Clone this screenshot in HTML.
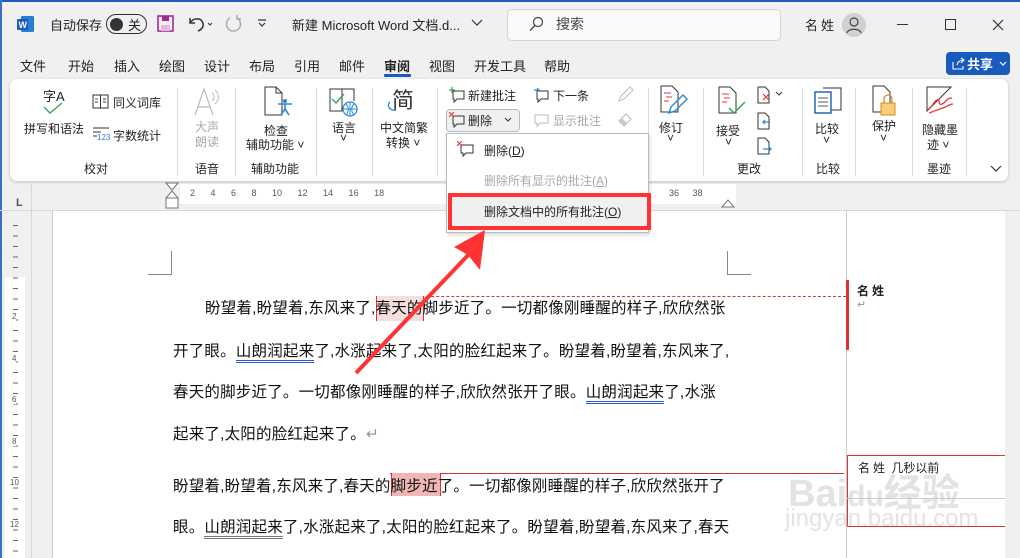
<!DOCTYPE html>
<html style="width:1020px;height:558px;overflow:hidden"><head><meta charset="utf-8">
<style>
*{margin:0;padding:0;box-sizing:border-box}
body{width:1020px;height:558px;overflow:hidden;background:#f0f0f0;font-family:"Liberation Sans","Noto Sans CJK SC",sans-serif;color:#222;position:relative}
.a{position:absolute;white-space:nowrap}
.t12{font-size:12px}.t13{font-size:13px}.t14{font-size:14px}
.g{color:#a8a8a8}
.sep{position:absolute;top:88px;width:1px;height:88px;background:#dcdcdc}
.doc{font-size:15.5px;letter-spacing:0.2px;color:#111}
.ul{border-bottom:3px double #2a5bd7}
.ulg{border-bottom:3px double #777}
.vn{position:absolute;left:12px;font-size:8px;color:#555}
</style></head><body>
<div class="a" style="left:0;top:0;width:1020px;height:2px;background:#1e5bbf"></div>
<div class="a" style="left:0;top:0;width:2px;height:558px;background:#3a6fc9"></div>
<!-- title bar -->
<svg class="a" style="left:17px;top:15px" width="18" height="18"><rect x="4" y="1" width="13" height="16" rx="1.5" fill="#2b7cd3"/><rect x="0" y="4" width="11" height="11" rx="1" fill="#185abd"/><text x="1.5" y="13" font-size="9" font-weight="bold" fill="#fff" font-family="Liberation Sans">W</text></svg>
<div class="a t13" style="left:50px;top:15px">自动保存</div>
<div class="a" style="left:106px;top:14px;width:41px;height:20px;border:1.3px solid #333;border-radius:10px"></div>
<div class="a" style="left:110px;top:18px;width:13px;height:13px;border-radius:50%;background:#333"></div>
<div class="a t13" style="left:128px;top:15px">关</div>
<svg class="a" style="left:157px;top:15px" width="18" height="18"><rect x="1" y="1" width="15" height="15" fill="none" stroke="#a32c94" stroke-width="1.6"/><rect x="5" y="1" width="7" height="5" fill="#a32c94"/><rect x="4" y="10" width="9" height="6" fill="#e7b7e0"/></svg>
<svg class="a" style="left:186px;top:14px" width="30" height="20"><path d="M4 4v5h5M4 9c3-5 11-6 13 0c1 4-2 7-5 8" fill="none" stroke="#333" stroke-width="1.5"/><path d="M22 9l2 2 2-2" fill="none" stroke="#333"/></svg>
<svg class="a" style="left:223px;top:14px" width="20" height="20"><path d="M14 4a7 7 0 1 1-7 0" fill="none" stroke="#aaa" stroke-width="1.5"/><path d="M14 1v4h4" fill="none" stroke="#aaa" stroke-width="1.5"/></svg>
<svg class="a" style="left:256px;top:18px" width="12" height="10"><path d="M2 2h8M3 5l3 3 3-3" fill="none" stroke="#333" stroke-width="1.2"/></svg>
<div class="a t13" style="left:292px;top:15px">新建 Microsoft Word 文档.d...</div>
<svg class="a" style="left:471px;top:19px" width="12" height="8"><path d="M1 1l5 5 5-5" fill="none" stroke="#333" stroke-width="1.2"/></svg>
<div class="a" style="left:507px;top:9px;width:274px;height:32px;background:#fafafa;border:1px solid #d4d4d4;border-radius:5px"></div>
<svg class="a" style="left:528px;top:16px" width="16" height="16"><circle cx="10" cy="6" r="4.5" fill="none" stroke="#444" stroke-width="1.2"/><path d="M7 9.5L2 14.5" stroke="#444" stroke-width="1.3"/></svg>
<div class="a t14" style="left:556px;top:14px;color:#444">搜索</div>
<div class="a t13" style="left:805px;top:15px;letter-spacing:3px">名姓</div>
<div class="a" style="left:842px;top:13px;width:24px;height:24px;border-radius:50%;background:#d0d0d0"></div>
<svg class="a" style="left:842px;top:13px" width="24" height="24"><circle cx="12" cy="9" r="4" fill="none" stroke="#444" stroke-width="1.2"/><path d="M5 20c1-5 13-5 14 0" fill="none" stroke="#444" stroke-width="1.2"/></svg>
<div class="a" style="left:897px;top:24px;width:11px;height:1px;background:#333"></div>
<div class="a" style="left:945px;top:19px;width:11px;height:11px;border:1.2px solid #333"></div>
<svg class="a" style="left:992px;top:19px" width="12" height="12"><path d="M1 1l10 10M11 1L1 11" stroke="#333" stroke-width="1.2"/></svg>
<!-- tabs -->
<div class="a t13" style="left:20px;top:56px">文件</div>
<div class="a t13" style="left:68px;top:56px">开始</div>
<div class="a t13" style="left:114px;top:56px">插入</div>
<div class="a t13" style="left:159px;top:56px">绘图</div>
<div class="a t13" style="left:204px;top:56px">设计</div>
<div class="a t13" style="left:249px;top:56px">布局</div>
<div class="a t13" style="left:294px;top:56px">引用</div>
<div class="a t13" style="left:339px;top:56px">邮件</div>
<div class="a t13" style="left:384px;top:56px;font-weight:bold">审阅</div>
<div class="a" style="left:384px;top:74px;width:27px;height:3px;background:#185abd;border-radius:1px"></div>
<div class="a t13" style="left:429px;top:56px">视图</div>
<div class="a t13" style="left:474px;top:56px">开发工具</div>
<div class="a t13" style="left:544px;top:56px">帮助</div>
<div class="a" style="left:946px;top:52px;width:64px;height:23px;background:#185abd;border-radius:4px"></div>
<svg class="a" style="left:951px;top:56px" width="14" height="15"><path d="M2 6v7h10v-3M6 9c1-4 4-5 7-5M10 2l3 2-3 3" fill="none" stroke="#fff" stroke-width="1.1"/></svg>
<div class="a t13" style="left:967px;top:54px;color:#fff;font-weight:bold">共享</div>
<svg class="a" style="left:999px;top:61px" width="8" height="6"><path d="M1 1l3 3 3-3" fill="none" stroke="#fff" stroke-width="1.2"/></svg>
<!-- ribbon -->
<div class="a" style="left:10px;top:79px;width:998px;height:102px;background:#fff;border-radius:7px;box-shadow:0 1px 3px rgba(0,0,0,.2)"></div>
<div class="a t13" style="left:43px;top:86px">字A</div>
<svg class="a" style="left:42px;top:101px" width="22" height="14"><path d="M2 6l6 6 12-10" fill="none" stroke="#3aa757" stroke-width="1.4"/></svg>
<div class="a t12" style="left:24px;top:120px">拼写和语法</div>
<svg class="a" style="left:92px;top:94px" width="17" height="15"><rect x="1" y="1" width="15" height="13" fill="none" stroke="#333"/><path d="M8.5 1v13M3 5h3M11 5h3M11 8h3M3 8h3" stroke="#333"/><path d="M3 5h3" stroke="#e22"/></svg>
<div class="a t12" style="left:113px;top:94px">同义词库</div>
<svg class="a" style="left:92px;top:126px" width="20" height="14"><path d="M1 2h16M1 6h8M1 10h4" stroke="#333"/><text x="5" y="14" font-size="8" fill="#2b7cd3" font-family="Liberation Sans">123</text></svg>
<div class="a t12" style="left:113px;top:127px">字数统计</div>
<div class="a t12" style="left:84px;top:160px">校对</div>
<div class="sep" style="left:177px"></div>
<svg class="a" style="left:192px;top:87px" width="30" height="30"><path d="M3 28L12 2l9 26M6 20h12" fill="none" stroke="#bbb" stroke-width="1.2"/><path d="M20 6a5 5 0 0 1 0 8M23 3a9 9 0 0 1 0 14" fill="none" stroke="#bbb"/></svg>
<div class="a t12 g" style="left:195px;top:120px;line-height:15px">大声<br>朗读</div>
<div class="a t12" style="left:195px;top:160px">语音</div>
<div class="sep" style="left:235px"></div>
<svg class="a" style="left:263px;top:86px" width="30" height="32"><path d="M2 1h11l6 6v22H2z" fill="none" stroke="#333"/><path d="M13 1v6h6" fill="none" stroke="#333"/><circle cx="22" cy="15" r="2" fill="#2b88d8"/><path d="M15 18h14M22 18v5l-4 6M22 23l4 6" fill="none" stroke="#2b88d8" stroke-width="1.6"/></svg>
<div class="a t12" style="left:264px;top:122px">检查</div>
<div class="a t12" style="left:246px;top:136px">辅助功能 ˅</div>
<div class="a t12" style="left:251px;top:160px">辅助功能</div>
<div class="sep" style="left:316px"></div>
<svg class="a" style="left:328px;top:87px" width="32" height="30"><path d="M2 2h12v22H2zM14 2h12v12" fill="none" stroke="#333"/><path d="M4 12l4 4 8-9" fill="none" stroke="#3aa757" stroke-width="1.4"/><circle cx="22" cy="22" r="7" fill="#fff" stroke="#2b88d8" stroke-width="1.2"/><path d="M15 22h14M22 15v14M18 17c3 3 3 8 0 11M26 17c-3 3-3 8 0 11" fill="none" stroke="#2b88d8"/></svg>
<div class="a t12" style="left:332px;top:119px">语言</div>
<div class="a t12" style="left:340px;top:131px">˅</div>
<div class="sep" style="left:372px"></div>
<svg class="a" style="left:385px;top:84px" width="34" height="32"><text x="7" y="24" font-size="22" font-family="Noto Sans CJK SC" fill="#333">简</text><path d="M5 18c-4 4 0 9 6 8" fill="none" stroke="#2b88d8" stroke-width="1.4"/></svg>
<div class="a t12" style="left:380px;top:119px">中文简繁</div>
<div class="a t12" style="left:386px;top:134px">转换 ˅</div>
<div class="sep" style="left:437px"></div>
<svg class="a" style="left:449px;top:87px" width="17" height="16"><path d="M4 4h11v8H8l-3 3v-3H4z" fill="none" stroke="#333"/><path d="M3 0v6M0 3h6" stroke="#3aa757" stroke-width="1.2"/></svg>
<div class="a t12" style="left:468px;top:87px">新建批注</div>
<svg class="a" style="left:533px;top:87px" width="17" height="16"><path d="M4 4h11v8H8l-3 3v-3H4z" fill="none" stroke="#333"/><path d="M1 3h5l-2-2M6 3l-2 2" fill="none" stroke="#2b88d8" stroke-width="1.2"/></svg>
<div class="a t12" style="left:553px;top:87px">下一条</div>
<svg class="a" style="left:616px;top:86px" width="18" height="18"><path d="M3 15l2-5 9-9 3 3-9 9z" fill="none" stroke="#bbb"/></svg>
<div class="a" style="left:446px;top:109px;width:74px;height:23px;background:#f0f0f0;border:1px solid #bbb;border-radius:4px"></div>
<svg class="a" style="left:449px;top:112px" width="17" height="16"><path d="M4 4h11v8H8l-3 3v-3H4z" fill="none" stroke="#333"/><path d="M0 0l5 5M5 0L0 5" stroke="#e33" stroke-width="1.1"/></svg>
<div class="a t12" style="left:468px;top:112px">删除</div>
<svg class="a" style="left:504px;top:117px" width="9" height="6"><path d="M1 1l3 3 3-3" fill="none" stroke="#333" stroke-width="1.1"/></svg>
<svg class="a" style="left:533px;top:112px" width="17" height="16"><path d="M2 3h13v8H7l-3 3v-3H2z" fill="none" stroke="#bbb"/></svg>
<div class="a t12 g" style="left:553px;top:112px">显示批注</div>
<svg class="a" style="left:616px;top:110px" width="18" height="18"><path d="M3 11l7-7 5 5-7 7z" fill="none" stroke="#bbb"/><path d="M3 11l5 5 3-3-5-5z" fill="#ccc"/></svg>
<div class="sep" style="left:648px"></div>
<svg class="a" style="left:659px;top:85px" width="30" height="32"><path d="M2 1h11l6 6v20H2z" fill="none" stroke="#333"/><path d="M5 8h7M7 12h6M5 16h5" stroke="#e33"/><path d="M10 28l2-6 12-12 4 4-12 12z" fill="none" stroke="#2b88d8" stroke-width="1.4"/></svg>
<div class="a t12" style="left:659px;top:119px">修订</div>
<div class="a t12" style="left:667px;top:131px">˅</div>
<div class="sep" style="left:703px"></div>
<svg class="a" style="left:717px;top:86px" width="32" height="32"><path d="M2 1h11l6 6v20H2z" fill="none" stroke="#333"/><path d="M5 8h7M7 12h6M5 16h5" stroke="#e33"/><path d="M12 22l5 5 11-11" fill="none" stroke="#3aa757" stroke-width="1.5"/></svg>
<div class="a t12" style="left:716px;top:122px">接受</div>
<div class="a t12" style="left:725px;top:135px">˅</div>
<svg class="a" style="left:756px;top:86px" width="30" height="18"><path d="M2 1h7l4 4v12H2z" fill="none" stroke="#333"/><path d="M7 8l6 6M13 8l-6 6" stroke="#e33" stroke-width="1.2"/><path d="M20 6l3 3 3-3" fill="none" stroke="#333"/></svg>
<svg class="a" style="left:756px;top:112px" width="18" height="18"><path d="M2 1h7l4 4v12H2z" fill="none" stroke="#333"/><path d="M14 10H7l2-2M7 10l2 2" fill="none" stroke="#2b88d8" stroke-width="1.2"/></svg>
<svg class="a" style="left:756px;top:137px" width="18" height="18"><path d="M2 1h7l4 4v12H2z" fill="none" stroke="#333"/><path d="M7 12h8l-2-2M15 12l-2 2" fill="none" stroke="#2b88d8" stroke-width="1.2"/></svg>
<div class="a t12" style="left:737px;top:160px">更改</div>
<div class="sep" style="left:802px"></div>
<svg class="a" style="left:813px;top:87px" width="30" height="30"><path d="M10 1h18v22H10" fill="none" stroke="#333"/><rect x="2" y="5" width="16" height="21" fill="#fff" stroke="#185abd" stroke-width="1.4"/><path d="M5 11h10M5 15h10M5 19h10" stroke="#555"/></svg>
<div class="a t12" style="left:815px;top:120px">比较</div>
<div class="a t12" style="left:823px;top:133px">˅</div>
<div class="a t12" style="left:816px;top:160px">比较</div>
<div class="sep" style="left:855px"></div>
<svg class="a" style="left:871px;top:85px" width="30" height="34"><path d="M2 1h11l6 6v20H2z" fill="none" stroke="#333"/><rect x="10" y="18" width="14" height="12" fill="#f8cd7c" stroke="#d98c1a"/><path d="M13 18v-4a4 4 0 0 1 8 0v4" fill="none" stroke="#d98c1a" stroke-width="1.3"/></svg>
<div class="a t12" style="left:872px;top:117px">保护</div>
<div class="a t12" style="left:880px;top:131px">˅</div>
<div class="sep" style="left:912px"></div>
<svg class="a" style="left:925px;top:85px" width="30" height="30"><path d="M2 2h24L2 26z" fill="none" stroke="#333"/><path d="M2 25c6-3 6-8 10-10s0 6 5 4 4-6 10-6M4 28c6-2 10-4 14-5s6-4 10-4" fill="none" stroke="#e33" stroke-width="1.3"/></svg>
<div class="a t12" style="left:922px;top:121px">隐藏墨</div>
<div class="a t12" style="left:927px;top:136px">迹 ˅</div>
<div class="a t12" style="left:927px;top:160px">墨迹</div>
<div class="sep" style="left:966px"></div>
<svg class="a" style="left:990px;top:165px" width="12" height="8"><path d="M1 1l5 5 5-5" fill="none" stroke="#333" stroke-width="1.2"/></svg>
<!-- rulers -->
<div class="a" style="left:16px;top:197px;font-size:11px;font-weight:bold;color:#555">L</div>
<div class="a" style="left:31px;top:183px;width:1px;height:375px;background:#d8d8d8"></div>
<div class="a" style="left:0;top:210px;width:1020px;height:1px;background:#d8d8d8"></div>
<div class="a" style="left:180px;top:184px;width:556px;height:20px;background:#fff"></div>
<div class="a" style="left:190px;top:188px;font-size:9px;color:#555;word-spacing:13px">2 4 6 8 10 12 14 16 18</div>
<div class="a" style="left:669px;top:188px;font-size:9px;color:#555;word-spacing:11px">36 38</div>
<svg class="a" style="left:164px;top:182px" width="16" height="30"><path d="M2 1h12l-6 7z M2 16l6-7 6 7z" fill="#fff" stroke="#777"/><rect x="2" y="16" width="12" height="10" fill="#fff" stroke="#777"/></svg>
<svg class="a" style="left:720px;top:197px" width="16" height="12"><path d="M2 10l6-7 6 7z" fill="#fff" stroke="#777"/></svg>
<div class="a" style="left:5px;top:277px;width:20px;height:281px;background:#fff"></div>
<div class="a" style="left:13px;top:216px;width:5px;height:342px;background:repeating-linear-gradient(transparent 0 9px,#666 9px 10px,transparent 10px 10.5px)"></div>
<div class="vn" style="top:312px;background:#fff">2</div>
<div class="vn" style="top:354px;background:#fff">4</div>
<div class="vn" style="top:395px;background:#fff">6</div>
<div class="vn" style="top:437px;background:#fff">8</div>
<div class="vn" style="top:478px;background:#fff;left:10px">10</div>
<div class="vn" style="top:520px;background:#fff;left:10px">12</div>
<!-- page -->
<div class="a" style="left:52px;top:211px;width:1px;height:347px;background:#ccc"></div>
<div class="a" style="left:53px;top:211px;width:793px;height:347px;background:#fff"></div>
<div class="a" style="left:846px;top:211px;width:1px;height:347px;background:#c8c8c8"></div>
<div class="a" style="left:847px;top:211px;width:158px;height:347px;background:#fff"></div>
<div class="a" style="left:171px;top:251px;width:1px;height:24px;background:#888"></div>
<div class="a" style="left:148px;top:274px;width:24px;height:1px;background:#888"></div>
<div class="a" style="left:727px;top:251px;width:1px;height:24px;background:#888"></div>
<div class="a" style="left:727px;top:274px;width:24px;height:1px;background:#888"></div>
<div class="a" style="left:376px;top:296px;width:470px;border-top:1px dashed #d33"></div>
<div class="a" style="left:376px;top:296px;width:48px;height:25px;background:#f7dede;border-left:1px solid #d33;border-right:1px solid #d33"></div>
<div class="a" style="left:390px;top:473px;width:454px;height:1px;background:#c33"></div>
<div class="a" style="left:391px;top:473px;width:50px;height:23px;background:#f1b5b5;border-left:1px solid #c33;border-right:1px solid #c33"></div>
<div class="a doc" style="left:205px;top:296px">盼望着,盼望着,东风来了,春天的脚步近了。一切都像刚睡醒的样子,欣欣然张</div>
<div class="a doc" style="left:173px;top:339px">开了眼。<span class="ul">山朗润起来</span>了,水涨起来了,太阳的脸红起来了。盼望着,盼望着,东风来了,</div>
<div class="a doc" style="left:173px;top:380px">春天的脚步近了。一切都像刚睡醒的样子,欣欣然张开了眼。<span class="ul">山朗润起来</span>了,水涨</div>
<div class="a doc" style="left:173px;top:422px">起来了,太阳的脸红起来了。<span style="color:#999">↵</span></div>
<div class="a doc" style="left:173px;top:474px">盼望着,盼望着,东风来了,春天的脚步近了。一切都像刚睡醒的样子,欣欣然张开了</div>
<div class="a doc" style="left:173px;top:515px">眼。<span class="ulg">山朗润起来</span>了,水涨起来了,太阳的脸红起来了。盼望着,盼望着,东风来了,春天</div>
<!-- comments -->
<div class="a" style="left:846px;top:280px;width:3px;height:70px;background:#d33"></div>
<div class="a t12" style="left:857px;top:282px;letter-spacing:3px;font-weight:bold">名姓</div>
<div class="a" style="left:857px;top:298px;font-size:11px;color:#999">↵</div>
<div class="a" style="left:847px;top:455px;width:158px;height:72px;border-top:1px solid #d33;border-bottom:1px solid #d33;border-left:1px solid #d33"></div>
<div class="a" style="left:847px;top:498px;width:158px;height:1px;background:#ccc"></div>
<div class="a t12" style="left:858px;top:459px"><span style="letter-spacing:3px">名姓</span> 几秒以前</div>
<div class="a" style="left:788px;top:462px;font-size:38px;font-weight:bold;color:rgba(200,200,200,.5)">Bai<span style="font-size:30px">du</span>经验</div>
<div class="a" style="left:785px;top:505px;font-size:24px;color:rgba(200,200,200,.5)">jingyan.baidu.com</div>
<!-- dropdown -->
<div class="a" style="left:446px;top:133px;width:203px;height:100px;background:#fff;border:1px solid #bbb;box-shadow:1px 2px 4px rgba(0,0,0,.15)"></div>
<svg class="a" style="left:457px;top:141px" width="18" height="17"><path d="M4 4h12v8H9l-3 3v-3H4z" fill="none" stroke="#333"/><path d="M0 0l5 5M5 0L0 5" stroke="#e33" stroke-width="1.1"/></svg>
<div class="a t12" style="left:484px;top:142px">删除(<u>D</u>)</div>
<div class="a t12 g" style="left:484px;top:172px">删除所有显示的批注(<u>A</u>)</div>
<div class="a" style="left:448px;top:193px;width:203px;height:37px;border:4px solid #f33"></div>
<div class="a" style="left:452px;top:197px;width:195px;height:29px;background:#f0f0f0"></div>
<div class="a t12" style="left:484px;top:203px">删除文档中的所有批注(<u>O</u>)</div>
<!-- arrow -->
<svg class="a" style="left:340px;top:225px" width="160" height="160"><path d="M16 148L132 26" stroke="#f33" stroke-width="4"/><path d="M145 5L140 45 128 30 114 22z" fill="#f33"/></svg>
</body></html>
